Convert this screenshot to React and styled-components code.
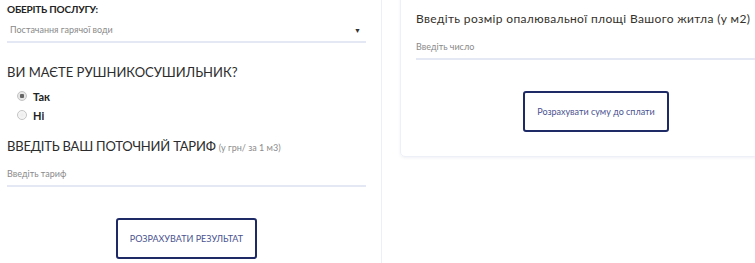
import React from "react";
import styled, { createGlobalStyle } from "styled-components";

const Global = createGlobalStyle`
  html, body { margin: 0; padding: 0; background: #fff; }
  body { font-family: Lato, "Open Sans", sans-serif; color: #333; overflow: hidden; }
  * { box-sizing: border-box; }
`;

const Page = styled.div`
  display: flex;
  width: 755px;
  height: 263px;
  overflow: hidden;
`;

const LeftColumn = styled.div`
  width: 382px;
  flex: none;
  padding: 0 15px 0 7px;
  border-right: 1px solid #eceff7;
  display: flex;
  flex-direction: column;
`;

const RightColumn = styled.div`
  flex: 1;
  padding-left: 18px;
  display: flex;
  flex-direction: column;
  min-width: 0;
`;

const Card = styled.div`
  margin-top: -20px;
  height: 177px;
  width: 380px;
  flex: none;
  border: 1px solid #eef0f7;
  border-radius: 5px;
  box-shadow: 0 1px 3px rgba(60, 80, 140, 0.08);
  padding: 28px 0 0 15px;
  display: flex;
  flex-direction: column;
`;

const Label = styled.div`
  font-size: 10px;
  font-weight: 700;
  color: #222;
  line-height: 14px;
  margin-top: 2px;
  letter-spacing: -0.2px;
`;

const Field = styled.div`
  height: ${(p) => p.$h}px;
  margin-top: ${(p) => p.$mt}px;
  border-bottom: 2px solid #e3e8f4;
  display: flex;
  align-items: flex-end;
  justify-content: space-between;
  padding: 0 5px 6px ${(p) => p.$pl || 0}px;
`;

const Placeholder = styled.span`
  font-size: 9px;
  line-height: 10px;
  color: #8a8a8a;
`;

const Arrow = styled.span`
  font-size: 7px;
  line-height: 10px;
  color: #333;
`;

const Heading = styled.div`
  font-size: ${(p) => p.$fs || 13}px;
  font-weight: 400;
  color: ${(p) => p.$c || "#2c2c2c"};
  line-height: 20px;
  margin-top: ${(p) => p.$mt}px;
  letter-spacing: ${(p) => p.$ls || 0}px;
  white-space: nowrap;
`;

const Small = styled.span`
  font-size: 9px;
  color: #8c8c8c;
  letter-spacing: 0;
`;

const Radios = styled.div`
  display: flex;
  flex-direction: column;
  gap: 7px;
  margin-top: 8px;
  padding-left: 10px;
`;

const RadioRow = styled.label`
  display: flex;
  align-items: center;
  gap: 6px;
  font-size: 11px;
  font-weight: 700;
  color: #222;
  height: 12px;
`;

const Dot = styled.span`
  width: 10px;
  height: 10px;
  border-radius: 50%;
  border: 1px solid #c4c4c4;
  background: radial-gradient(circle, ${(p) => (p.$on ? "#666 0 2px, #e6e6e6 2.5px" : "#ececec 0, #fafafa 100%")});
  flex: none;
`;

const ButtonWrap = styled.div`
  display: flex;
  padding-left: ${(p) => p.$pl}px;
  margin-top: ${(p) => p.$mt}px;
`;

const Button = styled.button`
  width: ${(p) => p.$w}px;
  height: ${(p) => p.$h}px;
  background: #fff;
  border: 2px solid #1e2a66;
  border-radius: 3px;
  color: #4a5290;
  font-family: Lato, "Open Sans", sans-serif;
  font-size: 9px;
  padding: 0;
`;

export default function App() {
  return (
    <>
      <Global />
      <Page>
        <LeftColumn>
          <Label>ОБЕРІТЬ ПОСЛУГУ:</Label>
          <Field $h={27} $mt={0} $pl={3}>
            <Placeholder>Постачання гарячої води</Placeholder>
            <Arrow>▼</Arrow>
          </Field>
          <Heading $mt={19}>ВИ МАЄТЕ РУШНИКОСУШИЛЬНИК?</Heading>
          <Radios>
            <RadioRow><Dot $on />Так</RadioRow>
            <RadioRow><Dot />Ні</RadioRow>
          </Radios>
          <Heading $mt={15} $ls={-0.2}>
            ВВЕДІТЬ ВАШ ПОТОЧНИЙ ТАРИФ <Small>(у грн/ за 1 м3)</Small>
          </Heading>
          <Field $h={29} $mt={0}>
            <Placeholder>Введіть тариф</Placeholder>
          </Field>
          <ButtonWrap $pl={109} $mt={31}>
            <Button $w={141} $h={41}>РОЗРАХУВАТИ РЕЗУЛЬТАТ</Button>
          </ButtonWrap>
        </LeftColumn>
        <RightColumn>
          <Card>
            <Heading $mt={0} $fs={12} $c="#35312c" $ls={0.35}>
              Введіть розмір опалювальної площі Вашого житла (у м2)
            </Heading>
            <Field $h={31} $mt={0}>
              <Placeholder>Введіть число</Placeholder>
            </Field>
            <ButtonWrap $pl={107} $mt={31}>
              <Button $w={146} $h={41}>Розрахувати суму до сплати</Button>
            </ButtonWrap>
          </Card>
        </RightColumn>
      </Page>
    </>
  );
}
